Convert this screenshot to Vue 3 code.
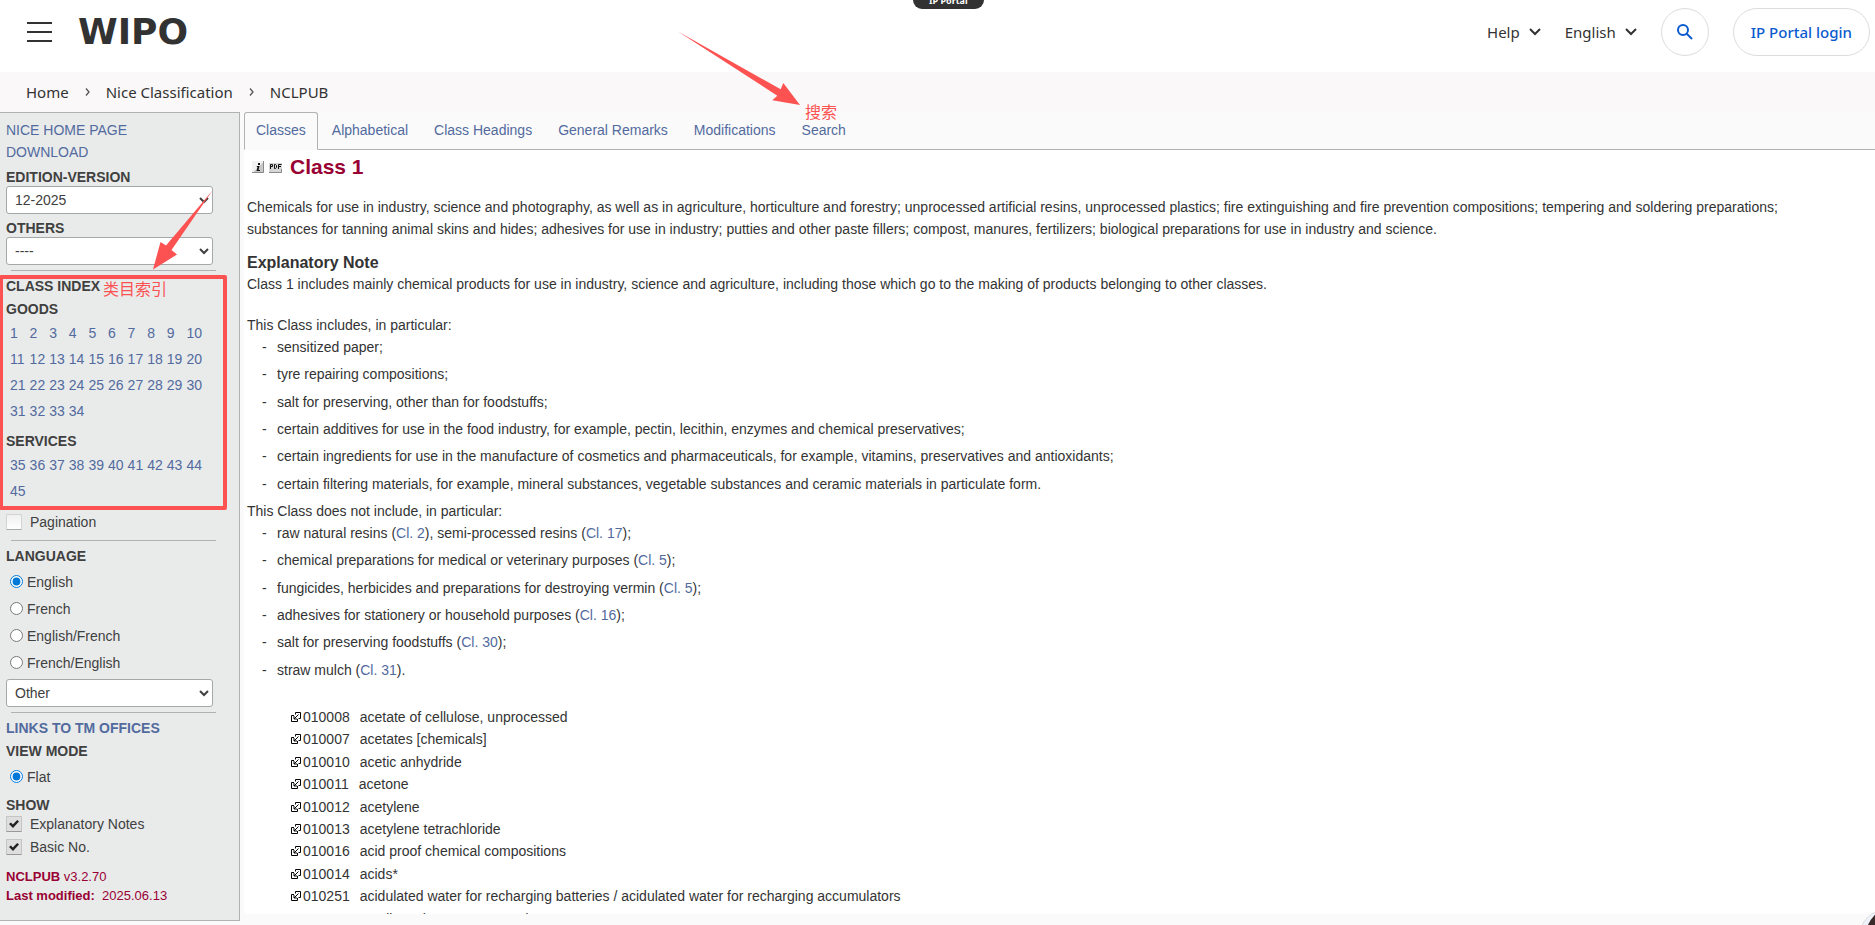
<template>
  <div class="page">
    <header class="top-bar">
      <button class="icon-btn" type="button" aria-label="Menu">
        <svg width="25" height="20" viewBox="0 0 25 20">
          <path d="M0 1H25M0 10H25M0 19H25" stroke="#323232" stroke-width="2" />
        </svg>
      </button>
      <a href="#" class="logo">WIPO</a>
      <span class="portal-tag">IP Portal</span>
      <nav class="top-nav">
        <button v-for="item in topMenus" :key="item" type="button" class="menu-btn">
          {{ item }}
          <svg width="12" height="8" viewBox="0 0 12 8">
            <path d="M1 1L6 6L11 1" fill="none" stroke="#323232" stroke-width="2" />
          </svg>
        </button>
        <button type="button" class="search-btn" aria-label="Search">
          <svg width="16" height="16" viewBox="0 0 16 16">
            <circle cx="6" cy="6" r="5" fill="none" stroke="#0a5bd0" stroke-width="2" />
            <path d="M9.5 9.5L15 15" stroke="#0a5bd0" stroke-width="2" />
          </svg>
        </button>
        <button type="button" class="login-btn">IP Portal login</button>
      </nav>
    </header>

    <nav class="breadcrumb">
      <template v-for="(crumb, i) in crumbs" :key="crumb">
        <svg v-if="i > 0" width="5" height="8" viewBox="0 0 5 8">
          <path d="M1 0.5L4 4L1 7.5" fill="none" stroke="#555" stroke-width="1.3" />
        </svg>
        <a href="#">{{ crumb }}</a>
      </template>
    </nav>

    <div class="workspace">
      <aside class="sidebar">
        <a href="#" class="side-link">NICE HOME PAGE</a>
        <a href="#" class="side-link">DOWNLOAD</a>
        <label class="heading" for="edition">EDITION-VERSION</label>
        <select id="edition" v-model="edition">
          <option>12-2025</option>
          <option>12-2024</option>
        </select>
        <label class="heading" for="others">OTHERS</label>
        <select id="others" v-model="others">
          <option>----</option>
        </select>
        <hr>

        <h2 class="heading">CLASS INDEX</h2>
        <h2 class="heading">GOODS</h2>
        <div class="numbers">
          <a v-for="n in 34" :key="n" href="#" @click.prevent="current = n">{{ n }}</a>
        </div>
        <h2 class="heading">SERVICES</h2>
        <div class="numbers">
          <a v-for="n in 11" :key="n" href="#" @click.prevent="current = n + 34">{{ n + 34 }}</a>
        </div>
        <label class="check pagination"><input v-model="pagination" type="checkbox">Pagination</label>
        <hr>

        <h2 class="heading">LANGUAGE</h2>
        <div class="radios">
          <label v-for="lang in languages" :key="lang">
            <input v-model="language" type="radio" name="language" :value="lang">{{ lang }}
          </label>
        </div>
        <select v-model="otherLanguage" aria-label="Other language">
          <option>Other</option>
        </select>
        <hr>

        <a href="#" class="heading offices">LINKS TO TM OFFICES</a>
        <h2 class="heading">VIEW MODE</h2>
        <div class="radios">
          <label><input v-model="viewMode" type="radio" name="view" value="flat">Flat</label>
        </div>
        <h2 class="heading">SHOW</h2>
        <label class="check"><input v-model="showNotes" type="checkbox">Explanatory Notes</label>
        <label class="check"><input v-model="showNo" type="checkbox">Basic No.</label>
        <div class="version">
          <div><b>NCLPUB</b> v3.2.70</div>
          <div><b>Last modified:</b>&nbsp; 2025.06.13</div>
        </div>
      </aside>

      <main class="main">
        <nav class="tabs">
          <a v-for="tab in tabs" :key="tab" href="#" :class="{ active: tab === activeTab }" @click.prevent="activeTab = tab">{{ tab }}</a>
        </nav>
        <div class="content">
          <div class="title">
            <svg width="12" height="12" viewBox="0 0 12 12">
              <path d="M0 12L12 0V12Z" fill="#c8c8c8" />
              <path d="M0 12L12 0H0Z" fill="#f2f2f2" />
              <path d="M0 11.5H11.5V0" fill="none" stroke="#8a8a8a" />
              <path d="M6 2H8V4H6ZM5 5H7.5L6.5 9H8V10H4.5L5.5 6H4.5Z" fill="#111" />
            </svg>
            <svg width="13" height="12" viewBox="0 0 13 12">
              <path d="M0 2H13V12H0Z" fill="#d6d6d6" />
              <path d="M0 11.5H12.5V8" fill="none" stroke="#8a8a8a" />
              <path d="M1.5 8V3.5H3.5V5.5H1.5M5.5 3.5V7.5H6.5L7.5 6.5V4.5L6.5 3.5ZM9.5 8V3.5H12.5M9.5 5.5H12" fill="none" stroke="#111" />
            </svg>
            <h1>Class {{ current }}</h1>
          </div>
          <p class="summary">
            Chemicals for use in industry, science and photography, as well as in agriculture, horticulture and forestry; unprocessed artificial resins, unprocessed plastics; fire extinguishing and fire prevention compositions; tempering and soldering preparations; substances for tanning animal skins and hides; adhesives for use in industry; putties and other paste fillers; compost, manures, fertilizers; biological preparations for use in industry and science.
          </p>
          <template v-if="showNotes">
            <h3>Explanatory Note</h3>
            <p>Class 1 includes mainly chemical products for use in industry, science and agriculture, including those which go to the making of products belonging to other classes.</p>
            <p class="includes">This Class includes, in particular:</p>
            <ul class="notes">
              <li v-for="line in includes" :key="line">{{ line }}</li>
            </ul>
            <p>This Class does not include, in particular:</p>
            <ul class="notes">
              <li v-for="(line, i) in excludes" :key="i">
                <template v-for="(part, j) in line" :key="j"><a v-if="part.startsWith('Cl.')" href="#">{{ part }}</a><template v-else>{{ part }}</template></template>
              </li>
            </ul>
          </template>
          <ul class="terms">
            <li v-for="term in terms" :key="term.no">
              <svg width="10" height="10" viewBox="0 0 10 10">
                <path d="M4.5 2.5V0.5H9.5V6.5H7.5M3 3.5H0.5V9.5H6.5V7" fill="none" stroke="#000" />
                <path d="M7.5 2.5L3 7M3 4V7H6" fill="none" stroke="#000" />
              </svg>
              <span v-if="showNo" class="no">{{ term.no }}</span>{{ term.text }}
            </li>
          </ul>
        </div>
      </main>
    </div>

    <!-- markup drawn over the page -->
    <div class="mark-box"></div>
    <span class="mark-text mark-index">类目索引</span>
    <span class="mark-text mark-search">搜索</span>
    <svg class="mark-arrows" width="820" height="280" viewBox="0 0 820 280">
      <path d="M678 31.5L780.7 89.3L783.3 83L800 105L772.3 100.3L777.3 95.7Z" fill="#fc5252" />
      <path d="M212.5 190.5L171.5 250L177 254.5L153 269.5L160.5 242L166 245.5Z" fill="#fc5252" />
    </svg>
    <svg class="assistant" width="16" height="16" viewBox="0 0 16 16">
      <circle cx="29" cy="29" r="29" fill="#eef2fa" stroke="#ddd" />
      <circle cx="34" cy="26" r="27" fill="#3b2a2a" />
    </svg>
  </div>
</template>

<script setup>
import { ref } from 'vue'

const topMenus = ['Help', 'English']
const crumbs = ['Home', 'Nice Classification', 'NCLPUB']
const tabs = ['Classes', 'Alphabetical', 'Class Headings', 'General Remarks', 'Modifications', 'Search']
const languages = ['English', 'French', 'English/French', 'French/English']

const activeTab = ref('Classes')
const current = ref(1)
const edition = ref('12-2025')
const others = ref('----')
const language = ref('English')
const otherLanguage = ref('Other')
const viewMode = ref('flat')
const pagination = ref(false)
const showNotes = ref(true)
const showNo = ref(true)

const includes = [
  'sensitized paper;',
  'tyre repairing compositions;',
  'salt for preserving, other than for foodstuffs;',
  'certain additives for use in the food industry, for example, pectin, lecithin, enzymes and chemical preservatives;',
  'certain ingredients for use in the manufacture of cosmetics and pharmaceuticals, for example, vitamins, preservatives and antioxidants;',
  'certain filtering materials, for example, mineral substances, vegetable substances and ceramic materials in particulate form.'
]

const excludes = [
  ['raw natural resins (', 'Cl. 2', '), semi-processed resins (', 'Cl. 17', ');'],
  ['chemical preparations for medical or veterinary purposes (', 'Cl. 5', ');'],
  ['fungicides, herbicides and preparations for destroying vermin (', 'Cl. 5', ');'],
  ['adhesives for stationery or household purposes (', 'Cl. 16', ');'],
  ['salt for preserving foodstuffs (', 'Cl. 30', ');'],
  ['straw mulch (', 'Cl. 31', ').']
]

const terms = [
  { no: '010008', text: 'acetate of cellulose, unprocessed' },
  { no: '010007', text: 'acetates [chemicals]' },
  { no: '010010', text: 'acetic anhydride' },
  { no: '010011', text: 'acetone' },
  { no: '010012', text: 'acetylene' },
  { no: '010013', text: 'acetylene tetrachloride' },
  { no: '010016', text: 'acid proof chemical compositions' },
  { no: '010014', text: 'acids*' },
  { no: '010251', text: 'acidulated water for recharging batteries / acidulated water for recharging accumulators' },
  { no: '010421', text: 'acrylic resins, unprocessed' }
]
</script>

<style>
body {
  margin: 0;
  background: #fafafa;
}
</style>

<style scoped>
* {
  box-sizing: border-box;
}
.page {
  position: relative;
  display: flex;
  flex-direction: column;
  height: 100vh;
  overflow: hidden;
  font: 14px/22px "Liberation Sans", Arial, sans-serif;
  color: #333;
}
a {
  color: #526a9e;
  text-decoration: none;
}
button {
  border: none;
  background: none;
  padding: 0;
  font: inherit;
  color: inherit;
  cursor: pointer;
}
h1, h2, h3, p, ul {
  margin: 0;
  padding: 0;
}
ul {
  list-style: none;
}

/* header */
.top-bar {
  display: flex;
  align-items: center;
  height: 72px;
  flex: none;
  padding: 0 5px 8px 27px;
  background: #fff;
  font-family: "Noto Sans", sans-serif;
  font-size: 15px;
}
.icon-btn {
  display: flex;
}
.logo {
  margin-left: 26px;
  font: bold 36px/40px "DejaVu Sans", sans-serif;
  color: #323232;
}
.portal-tag {
  position: absolute;
  top: -9px;
  left: 913px;
  height: 18px;
  padding: 0 16px;
  border-radius: 9px;
  background: #323232;
  color: #fff;
  font-size: 9px;
  font-weight: bold;
  line-height: 20px;
}
.top-nav {
  display: flex;
  align-items: center;
  margin-left: auto;
}
.menu-btn {
  display: flex;
  align-items: center;
  gap: 9px;
  margin-right: 24px;
}
.search-btn, .login-btn {
  height: 48px;
  border: 1px solid #ddd;
  border-radius: 24px;
}
.search-btn {
  display: flex;
  align-items: center;
  justify-content: center;
  width: 48px;
  margin-right: 24px;
}
.login-btn {
  padding: 0 17px;
  color: #0a5bd0;
  font-weight: 500;
}
.breadcrumb {
  display: flex;
  align-items: center;
  gap: 16px;
  height: 40px;
  flex: none;
  padding-left: 26px;
  background: #faf8f9;
  font-family: "Noto Sans", sans-serif;
  font-size: 15px;
}
.breadcrumb a {
  color: #323232;
}

/* sidebar */
.workspace {
  display: flex;
  align-items: flex-start;
  flex: 1;
  min-height: 0;
}
.sidebar {
  width: 240px;
  flex: none;
  padding: 6px 0 15px 6px;
  border: 1px solid #b0b2b2;
  border-left: none;
  background: #e9ebeb;
  color: #404040;
}
.side-link {
  display: block;
}
.heading {
  display: block;
  margin-top: 5px;
  font-size: 14px;
  font-weight: bold;
  line-height: 18px;
}
.sidebar select {
  display: block;
  width: 207px;
  height: 28px;
  padding: 0 0 0 4px;
  border: 1px solid #a4a8a8;
  border-radius: 3px;
  background: #fff;
  color: #404040;
  font: inherit;
}
.sidebar hr {
  width: 205px;
  margin: 5px 0 6px 5px;
  border: none;
  border-top: 1px solid #b0b2b2;
}
.numbers {
  display: grid;
  grid-template-columns: repeat(10, 1fr);
  margin: 2px 33px 8px 4px;
  line-height: 26px;
}
.check {
  display: flex;
  align-items: center;
  gap: 8px;
  margin-bottom: 3px;
  line-height: 20px;
}
.pagination {
  margin-bottom: 8px;
}
.check input {
  appearance: none;
  display: grid;
  place-items: center;
  width: 16px;
  height: 16px;
  margin: 0;
  border: 1px solid #d4d4d4;
  border-bottom-color: #aaa;
  border-radius: 1px;
  background: linear-gradient(#f0f0f0, #fff);
}
.check input:checked {
  border-color: #c4c4c4;
  border-bottom-color: #999;
  background: #dedede;
}
.check input:checked::after {
  content: "";
  width: 10px;
  height: 8px;
  background: #222;
  clip-path: polygon(0 50%, 20% 30%, 38% 55%, 82% 0, 100% 20%, 40% 100%);
}
.radios {
  margin: 4px 0 2px 4px;
}
.radios label {
  display: flex;
  align-items: center;
  gap: 4px;
  line-height: 27px;
}
.radios input {
  width: 13px;
  height: 13px;
  margin: 0 0 3px;
  accent-color: #0078d7;
}
.offices {
  color: #526a9e;
}
.version {
  margin-top: 10px;
  color: #990033;
  font-size: 13px;
  line-height: 19px;
}

/* class details */
.main {
  display: flex;
  flex-direction: column;
  align-self: stretch;
  flex: 1;
  min-width: 0;
  margin: 0 0 11px 4px;
}
.tabs {
  display: flex;
  gap: 2px;
  flex: none;
  border-bottom: 1px solid #b0b2b2;
}
.tabs a {
  margin-bottom: -1px;
  padding: 6px 11px 8px;
  border: 1px solid transparent;
  border-radius: 3px 3px 0 0;
}
.tabs .active {
  border-color: #b0b2b2;
  border-bottom-color: #fafafa;
  background: #fafafa;
}
.content {
  flex: 1;
  min-height: 0;
  overflow: hidden;
  padding: 5px 30px 0 3px;
  border-radius: 0 0 4px 4px;
  background: #fff;
}
.title {
  display: flex;
  align-items: center;
  gap: 5px;
  padding-left: 5px;
}
.title h1 {
  margin-left: 3px;
  color: #990033;
  font-size: 21px;
  line-height: 24px;
}
.summary {
  margin: 17px 0 13px;
}
h3 {
  font-size: 16px;
  line-height: 20px;
}
.includes {
  margin-top: 19px;
}
.notes {
  display: grid;
  grid-auto-rows: 1fr;
  min-height: 164px;
  padding-left: 15px;
}
.notes li::before {
  content: "-";
  display: inline-block;
  width: 15px;
}
.terms {
  display: grid;
  grid-auto-rows: 1fr;
  min-height: 224px;
  margin-top: 20px;
  padding-left: 44px;
}
.terms svg {
  margin-right: 2px;
}
.no {
  margin-right: 10px;
}

/* red markup */
.mark-box {
  position: absolute;
  top: 275px;
  left: -1px;
  width: 228px;
  height: 235px;
  border: 4px solid #fc5252;
  border-radius: 2px;
}
.mark-text {
  position: absolute;
  color: #fc5252;
  font: 16px/22px "Noto Sans CJK SC", sans-serif;
}
.mark-index {
  top: 277px;
  left: 103px;
}
.mark-search {
  top: 100px;
  left: 805px;
}
.mark-arrows {
  position: absolute;
  top: 0;
  left: 0;
  pointer-events: none;
}
.assistant {
  position: absolute;
  right: 0;
  bottom: 0;
}
</style>
